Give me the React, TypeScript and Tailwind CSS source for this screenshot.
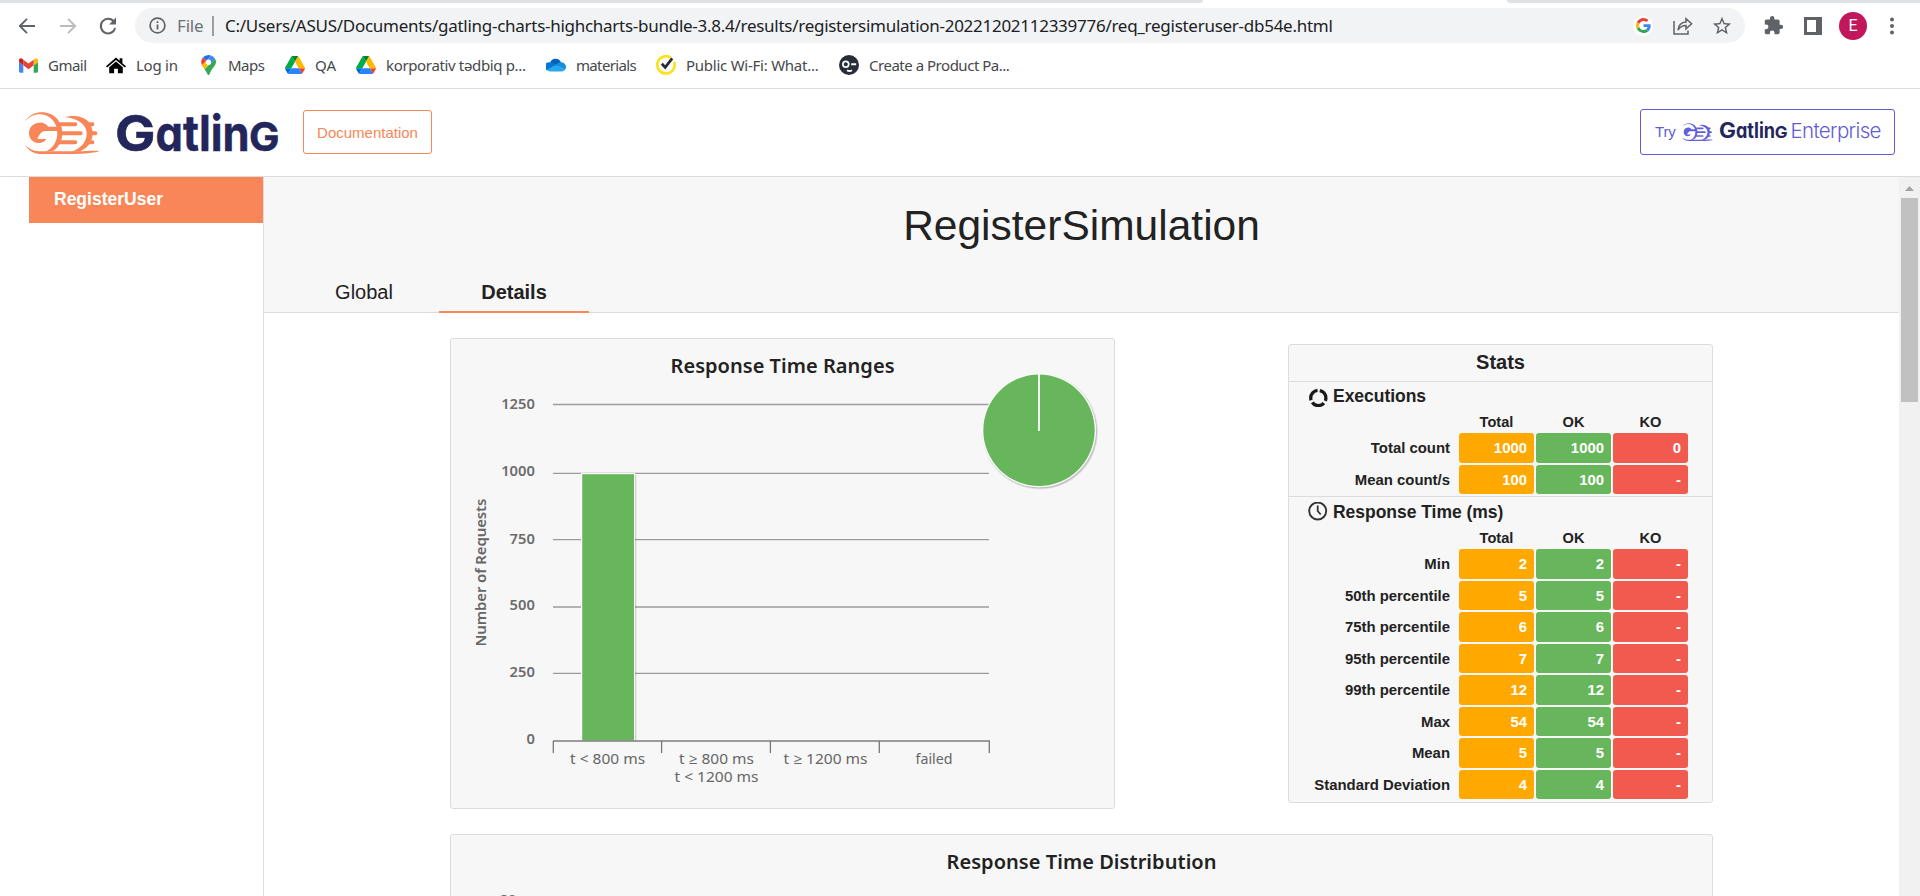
import type { ReactNode } from "react";

const ui = "font-['Noto_Sans','Open_Sans',sans-serif]";

function BackIcon({ flip, color }: { flip?: boolean; color: string }) {
  return (
    <svg width="20" height="20" viewBox="0 0 20 20" className={flip ? "-scale-x-100" : ""}>
      <path d="M18 10H3.500M10 2.800 2.800 10l7.200 7.200" fill="none" stroke={color} strokeWidth="1.900" />
    </svg>
  );
}

function ReloadIcon() {
  return (
    <svg width="20" height="20" viewBox="0 0 20 20">
      <path d="M15.900 5.600A7.300 7.300 0 1 0 17.200 12" fill="none" stroke="#5f6368" strokeWidth="2" />
      <path d="M18 1.600v6.900h-6.900z" fill="#5f6368" />
    </svg>
  );
}

function DriveIcon() {
  return (
    <svg width="20" height="18" viewBox="0 0 87.3 78">
      <path d="M6.6 66.85l3.85 6.65c.8 1.4 1.95 2.5 3.3 3.3L27.5 53H0c0 1.55.4 3.1 1.2 4.5z" fill="#0066da" />
      <path d="M43.65 25L29.9 1.2c-1.35.8-2.5 1.9-3.3 3.3L1.2 48.5A9 9 0 0 0 0 53h27.5z" fill="#00ac47" />
      <path d="M73.55 76.8c1.35-.8 2.5-1.9 3.3-3.3l1.6-2.75L86.1 57.5c.8-1.4 1.2-2.95 1.2-4.5H59.8l5.85 11.5z" fill="#ea4335" />
      <path d="M43.65 25L57.4 1.2C56.05.4 54.5 0 52.9 0H34.4c-1.6 0-3.15.45-4.5 1.2z" fill="#00832d" />
      <path d="M59.8 53H27.5L13.75 76.8c1.35.8 2.9 1.2 4.5 1.2h50.8c1.6 0 3.15-.45 4.5-1.2z" fill="#2684fc" />
      <path d="M73.4 26.5L60.7 4.5c-.8-1.4-1.95-2.5-3.3-3.3L43.65 25 59.8 53h27.45c0-1.55-.4-3.1-1.2-4.5z" fill="#ffba00" />
    </svg>
  );
}

function GatlingMark({ color, width, height }: { color: string; width: number; height: number }) {
  return (
    <svg width={width} height={height} viewBox="0 0 225 126" preserveAspectRatio="none" fill={color}>
      <path d="M0 28C14 8 32 1 51 1c36 0 61 28 61 62 0 24-10 42-27 53l-24 3c22-9 36-30 36-56C97 33 76 8 48 7 29 6 14 13 0 28z" />
      <path d="M0 98c12 13 28 20 48 20h112c20 0 42-3 64-1-20 8-60 9-110 9H50C28 126 10 116 0 98z" />
      <path d="M120 16c10-4 20-5 30-4 34 2 53 24 53 51 0 26-14 44-38 55l-26 1c26-9 46-28 46-54 0-27-26-46-65-49z" />
      <path d="M70 44C62 35 52 31 43 32 24 33 12 46 12 63c0 17 12 30 29 30 10 0 18-4 23-12H41c-4 0-4-2-2-5 5-10 11-18 20-19h45V44z" />
      <path d="M104 31h46q7 0 7 6t-7 6h-46zM108 58h58q7 0 7 6t-7 6h-58zM104 85h46q7 0 7 6t-7 6H98z" />
      <path d="M186 31h17q5 0 5 6t-5 6h-9zM198 58h14q5 0 5 6t-5 6h-14zM194 85h9q5 0 5 6t-5 6h-17z" />
    </svg>
  );
}

function Bookmark({ icon, label, w, track }: { icon: ReactNode; label: string; w: string; track: string }) {
  return (
    <div className={`flex shrink-0 items-center gap-[10px] ${w}`}>
      <span className="flex h-5 w-5 items-center justify-center">{icon}</span>
      <span className={`text-[15px] leading-5 whitespace-nowrap text-[#45484c] ${track}`}>{label}</span>
    </div>
  );
}

function BrowserChrome() {
  return (
    <div className={`flex h-[89px] flex-col border-b border-[#dadce0] bg-white ${ui}`}>
      <div className="flex h-[3px] justify-between overflow-hidden">
        <div className="h-[3px] w-[1203px] rounded-br-[6px] bg-[#dee1e6]" />
        <div className="h-[3px] w-[413px] rounded-bl-[6px] bg-[#dee1e6]" />
      </div>
      <div className="mt-[5px] flex h-[35px] items-center">
        <div className="flex w-[135px] items-center pl-[17px]">
          <BackIcon color="#5f6368" />
          <span className="ml-[21px] flex"><BackIcon flip color="#babcbe" /></span>
          <span className="ml-[20px] flex"><ReloadIcon /></span>
        </div>
        <div className="flex h-[35px] w-[1610px] items-center rounded-full bg-[#f1f3f4]">
          <svg className="ml-[14px]" width="17" height="17" viewBox="0 0 17 17">
            <circle cx="8.500" cy="8.500" r="7.400" fill="none" stroke="#5f6368" strokeWidth="1.700" />
            <path d="M8.500 7.400v5M8.500 4.200v1.800" stroke="#5f6368" strokeWidth="1.800" />
          </svg>
          <span className="ml-[11px] w-[28px] text-[17px] tracking-[-0.17px] whitespace-nowrap text-[#6d7175]">File</span>
          <span className="ml-[7px] h-5 w-[2px] bg-[#9a9da1]" />
          <span className="ml-[11px] w-[1110px] text-[17px] tracking-[-0.272px] whitespace-nowrap text-[#202124]">
            C:/Users/ASUS/Documents/gatling-charts-highcharts-bundle-3.8.4/results/registersimulation-20221202112339776/req_registeruser-db54e.html
          </span>
          <span className="ml-auto flex h-5 w-5 items-center justify-center rounded-full bg-white">
            <svg width="15" height="15" viewBox="0 0 48 48">
              <path fill="#EA4335" d="M24 9.5c3.54 0 6.71 1.22 9.21 3.6l6.85-6.85C35.9 2.38 30.47 0 24 0 14.62 0 6.51 5.38 2.56 13.22l7.98 6.19C12.43 13.72 17.74 9.5 24 9.5z" />
              <path fill="#4285F4" d="M46.98 24.55c0-1.57-.15-3.09-.38-4.55H24v9.02h12.94c-.58 2.96-2.26 5.48-4.78 7.18l7.73 6c4.51-4.18 7.09-10.36 7.09-17.65z" />
              <path fill="#FBBC05" d="M10.53 28.59c-.48-1.45-.76-2.99-.76-4.59s.27-3.14.76-4.59l-7.98-6.19C.92 16.46 0 20.12 0 24c0 3.88.92 7.54 2.56 10.78l7.97-6.19z" />
              <path fill="#34A853" d="M24 48c6.48 0 11.93-2.13 15.89-5.81l-7.73-6c-2.15 1.45-4.92 2.3-8.16 2.3-6.26 0-11.57-4.22-13.47-9.91l-7.98 6.19C6.51 42.62 14.62 48 24 48z" />
            </svg>
          </span>
          <svg className="ml-[19px]" width="22" height="20" viewBox="0 0 22 20" fill="none" stroke="#5f6368" strokeWidth="1.500">
            <path d="M2 5v13h14v-3.500" />
            <path d="M6 14c.6-5 3.600-7.600 8-7.900V2.600l5.600 5.100-5.600 5.100V9.600c-3.600 0-6 1.300-8 4.400z" />
          </svg>
          <svg className="mr-[12px] ml-[17px]" width="22" height="22" viewBox="0 0 24 24" fill="#5f6368">
            <path d="M22 9.240l-7.190-.62L12 2 9.190 8.630 2 9.240l5.460 4.730L5.820 21 12 17.270 18.180 21l-1.630-7.030L22 9.240zM12 15.400l-3.760 2.270 1-4.280-3.320-2.880 4.380-.38L12 6.100l1.710 4.040 4.380.38-3.320 2.880 1 4.280L12 15.400z" />
          </svg>
        </div>
        <svg className="ml-[18px]" width="21" height="21" viewBox="0 0 24 24" fill="#5f6368">
          <path d="M20.500 11H19V7c0-1.100-.9-2-2-2h-4V3.500a2.500 2.500 0 0 0-5 0V5H4c-1.100 0-2 .9-2 2v3.800h1.500a2.700 2.700 0 0 1 0 5.400H2V20c0 1.100.9 2 2 2h3.800v-1.500a2.700 2.700 0 0 1 5.400 0V22H17c1.100 0 2-.9 2-2v-4h1.500a2.500 2.500 0 0 0 0-5z" />
        </svg>
        <span className="ml-[20px] h-[18px] w-[18px] bg-[#5f6368] pt-[3px] pl-[3px]">
          <span className="block h-3 w-[9px] bg-white" />
        </span>
        <span className="ml-[17px] flex h-7 w-7 items-center justify-center rounded-full bg-[#c2185b] font-['Roboto',sans-serif] text-[16px] text-white">E</span>
        <svg className="ml-[22px]" width="6" height="18" viewBox="0 0 6 18" fill="#5f6368">
          <circle cx="3" cy="2.500" r="2" /><circle cx="3" cy="9" r="2" /><circle cx="3" cy="15.500" r="2" />
        </svg>
      </div>
      <div className="mt-[11px] flex h-[22px] items-center pl-[18px]">
        <Bookmark w="w-[88px]" track="tracking-[-0.52px]" label="Gmail" icon={
          <svg width="19" height="15" viewBox="52 42 88 66">
            <path fill="#4285f4" d="M58 108h14V74L52 59v43c0 3.320 2.690 6 6 6" />
            <path fill="#34a853" d="M120 108h14c3.320 0 6-2.690 6-6V59l-20 15" />
            <path fill="#fbbc04" d="M120 48v26l20-15v-8c0-7.420-8.470-11.650-14.400-7.200" />
            <path fill="#ea4335" d="M72 74V48l24 18 24-18v26L96 92" />
            <path fill="#c5221f" d="M52 51v8l20 15V48l-5.600-4.200c-5.940-4.450-14.400-.220-14.400 7.200" />
          </svg>} />
        <Bookmark w="w-[92px]" track="tracking-[-0.25px]" label="Log in" icon={
          <svg width="20" height="17" viewBox="0 0 20 17">
            <path d="M0 9.300L10 .6l3.600 3.100V1.300h2.800v4.900L20 9.300l-1.100 1.300L10 3 1.100 10.600zM3.200 10.300L10 4.500l6.800 5.800V16.300h-4.900v-4.600H8.100v4.600H3.200z" />
          </svg>} />
        <Bookmark w="w-[87px]" track="tracking-[-0.5px]" label="Maps" icon={
          <svg width="15" height="20" viewBox="0 0 15 20">
            <path d="M7.500 0A7.300 7.300 0 0 0 1.900 2.600L5.600 5.800 10 .5A7 7 0 0 0 7.500 0z" fill="#1a73e8" />
            <path d="M1.900 2.600A7.400 7.400 0 0 0 .9 10.200L5.600 5.800z" fill="#ea4335" />
            <path d="M10 .5L5.600 5.800l3.900 3.300 4.500-5.400A7.400 7.400 0 0 0 10 .5z" fill="#4285f4" />
            <path d="M5.600 5.800L.9 10.200c.6 1.300 1.700 2.600 2.700 4l6-7z" fill="#fbbc04" />
            <path d="M14 3.700L3.600 14.200C5.300 16.500 6.500 20 7.500 20c1.200 0 1.500-3 3.300-5.600 2-2.700 4.200-4.500 4.200-7.400 0-1.300-.4-2.300-1-3.300z" fill="#34a853" />
            <circle cx="7.500" cy="7.200" r="2.700" fill="#fff" />
          </svg>} />
        <Bookmark w="w-[71px]" track="tracking-normal" label="QA" icon={<DriveIcon />} />
        <Bookmark w="w-[190px]" track="tracking-[-0.35px]" label="korporativ tədbiq p..." icon={<DriveIcon />} />
        <Bookmark w="w-[110px]" track="tracking-[-0.66px]" label="materials" icon={
          <svg width="20" height="14" viewBox="0 0 20 14">
            <path d="M4 4.500A6 6 0 0 1 15 4.200L12 9z" fill="#0364b8" />
            <path d="M4 4.300c2 0 3 .5 4.500 1.500L12 8 2 12.500A4.200 4.200 0 0 1 4 4.300z" fill="#0078d4" />
            <path d="M15 4.200c3 0 5 2.200 5 4.800 0 1-.3 2-1 2.700L9.500 7C11.500 5.500 12.500 4.200 15 4.200z" fill="#1490df" />
            <path d="M9.500 7l9.700 4.600c-.8 1.100-2 1.900-3.500 1.900H4.300A4 4 0 0 1 1 11.700z" fill="#28a8ea" />
          </svg>} />
        <Bookmark w="w-[183px]" track="tracking-[-0.25px]" label="Public Wi-Fi: What..." icon={
          <svg width="20" height="20" viewBox="0 0 20 20" fill="none">
            <path d="M14.800 2.600A8.700 8.700 0 1 0 18.200 7" stroke="#fde11a" strokeWidth="2.600" />
            <path d="M5.800 8.800l3.400 3.600 7-9" stroke="#2b2d33" strokeWidth="2.800" />
          </svg>} />
        <Bookmark w="w-[170px]" track="tracking-[-0.48px]" label="Create a Product Pa..." icon={
          <svg width="20" height="20" viewBox="0 0 20 20" fill="none">
            <circle cx="10" cy="10" r="10" fill="#282d37" />
            <circle cx="6.800" cy="9.200" r="2.900" stroke="#fff" strokeWidth="1.700" />
            <path d="M12.200 9.200h5M8 15.200q2.500 1.600 5 0" stroke="#fff" strokeWidth="1.900" />
          </svg>} />
      </div>
    </div>
  );
}

function SiteHeader() {
  return (
    <header className="flex h-[88px] items-start border-b border-[#dcdcdc] bg-white pt-[20px]">
      <div className="flex w-[303px] items-start pl-[25px]">
        <span className="mt-[3px] flex"><GatlingMark color="#f98658" width={75} height={42} /></span>
        <svg className="-mt-[4px] ml-[15px] overflow-visible font-['Inter',sans-serif] font-bold [font-feature-settings:'cv11']" width="168" height="56" viewBox="0 0 168 56" fill="#23265b" stroke="#23265b" strokeWidth=".5">
          <text y="46" fontSize="50">
            <tspan x="0" textLength="40.500" lengthAdjust="spacingAndGlyphs">G</tspan>
            <tspan x="40.500" textLength="94" lengthAdjust="spacingAndGlyphs">atlin</tspan>
            <tspan x="134" fontSize="39" textLength="30.500" lengthAdjust="spacingAndGlyphs" className="uppercase">g</tspan>
          </text>
        </svg>
      </div>
      <a className="mt-px flex h-[44px] w-[129px] items-center justify-center rounded-[3px] border border-[#f98658] pt-[2px] text-[15px] text-[#f98658]">
        Documentation
      </a>
      <a className="mr-[25px] ml-auto flex h-[46px] w-[255px] items-center rounded-[3px] border border-[#5f5cd6] pl-[14px] text-[15px] text-[#5f5cd6]">
        <span className="mt-px w-[27px] tracking-[-0.2px]">Try</span>
        <GatlingMark color="#6361da" width={31} height={18} />
        <svg className="ml-[6px] overflow-visible font-['Inter',sans-serif] [font-feature-settings:'cv11']" width="166" height="30" viewBox="0 0 166 30">
          <text y="21" fontSize="21" fill="#23265b" className="font-bold">
            <tspan x="0" textLength="17" lengthAdjust="spacingAndGlyphs">G</tspan>
            <tspan x="17" textLength="39" lengthAdjust="spacingAndGlyphs">atlin</tspan>
            <tspan x="55.800" fontSize="16.500" textLength="12.800" lengthAdjust="spacingAndGlyphs" className="uppercase">g</tspan>
          </text>
          <text x="71.500" y="21" fontSize="20.500" textLength="91" fill="#5f5cd6" className="font-light">Enterprise</text>
        </svg>
      </a>
    </header>
  );
}

const yTicks = [
  { v: "1250", y: 404.5, b: 409.3 },
  { v: "1000", y: 473.3, b: 475.6 },
  { v: "750", y: 539.7, b: 543.5 },
  { v: "500", y: 607, b: 609.7 },
  { v: "250", y: 673.4, b: 677.3 },
];

const xLabels = [
  { t: "t < 800 ms", x: 607.6, y: 764.3, w: 75 },
  { t: "t ≥ 800 ms", x: 716.5, y: 764.3, w: 75 },
  { t: "t < 1200 ms", x: 716.5, y: 782.3, w: 84 },
  { t: "t ≥ 1200 ms", x: 825.5, y: 764.3, w: 84 },
  { t: "failed", x: 934, y: 764.3, w: 37 },
];

function RangesChart() {
  return (
    <svg width="663" height="469" viewBox="451 339 663 469" className={ui}>
      <text x="782.5" y="373.300" textAnchor="middle" fontSize="20" fontWeight="600" fill="#222" textLength="224">Response Time Ranges</text>
      <text transform="translate(485.700 572.500) rotate(-90)" textAnchor="middle" fontSize="15" fontWeight="600" fill="#666" textLength="148">Number of Requests</text>
      {yTicks.map((t) => (
        <g key={t.v}>
          <path d={`M553 ${t.y}H989`} stroke="#9b9b9b" strokeWidth="1.300" />
          <text x="534.800" y={t.b} textAnchor="end" fontSize="14.700" fontWeight="600" fill="#6b6b6b">{t.v}</text>
        </g>
      ))}
      <text x="534.800" y="744.300" textAnchor="end" fontSize="14.700" fontWeight="600" fill="#6b6b6b">0</text>
      <rect x="582" y="475" width="54.500" height="266" fill="#000" opacity="0.100" />
      <rect x="582" y="475" width="53.500" height="266" fill="#000" opacity="0.100" />
      <rect x="581" y="473" width="54" height="268" fill="#fff" />
      <rect x="582.200" y="474.200" width="51.800" height="266.300" fill="#68b65c" />
      <path d="M553 741H990" stroke="#7d7d7d" strokeWidth="1.600" />
      <path d="M553.3 741v12M661.6 741v12M770.4 741v12M879.300 741v12M989.300 741v12" stroke="#777" strokeWidth="1.300" />
      {xLabels.map((l) => (
        <text key={l.t + l.x} x={l.x} y={l.y} textAnchor="middle" fontSize="14.500" fill="#666" textLength={l.w} lengthAdjust="spacingAndGlyphs">{l.t}</text>
      ))}
      <circle cx="1040" cy="431.500" r="58" fill="#000" opacity="0.080" />
      <circle cx="1040" cy="431.500" r="57" fill="#000" opacity="0.150" />
      <circle cx="1039" cy="430.300" r="57" fill="#fff" />
      <circle cx="1039" cy="430.300" r="55.700" fill="#68b65c" />
      <path d="M1039 372.500V431" stroke="#fff" strokeWidth="1.800" />
    </svg>
  );
}

function DistributionChart() {
  return (
    <svg width="1261" height="61" viewBox="451 835 1261 61" className={ui}>
      <text x="1081.500" y="869.300" textAnchor="middle" fontSize="20" fontWeight="600" fill="#222" textLength="270">Response Time Distribution</text>
      <text x="516.500" y="904.800" textAnchor="end" fontSize="14.700" fontWeight="600" fill="#6b6b6b">80</text>
    </svg>
  );
}

type Row = [string, string, string, string];

const execRows: Row[] = [
  ["Total count", "1000", "1000", "0"],
  ["Mean count/s", "100", "100", "-"],
];
const timeRows: Row[] = [
  ["Min", "2", "2", "-"],
  ["50th percentile", "5", "5", "-"],
  ["75th percentile", "6", "6", "-"],
  ["95th percentile", "7", "7", "-"],
  ["99th percentile", "12", "12", "-"],
  ["Max", "54", "54", "-"],
  ["Mean", "5", "5", "-"],
  ["Standard Deviation", "4", "4", "-"],
];

function StatsSection({ icon, title, rows, headH }: { icon: ReactNode; title: string; rows: Row[]; headH: string }) {
  return (
    <div>
      <div className={`flex items-center gap-[5px] pl-[19px] ${headH}`}>
        {icon}
        <h3 className="text-[17.500px] tracking-[-0.03px] font-bold">{title}</h3>
      </div>
      <div className="grid h-[22px] grid-cols-[168px_75px_75px_75px] gap-x-[2px] text-center text-[14.600px] leading-[23px] font-bold">
        <span />
        <span>Total</span>
        <span>OK</span>
        <span>KO</span>
      </div>
      <div className="flex flex-col gap-[2px]">
        {rows.map((r) => (
          <div key={r[0]} className="grid h-[29.500px] grid-cols-[168px_75px_75px_75px] gap-x-[2px] text-[14.900px] leading-[31px] font-bold">
            <span className="h-[29.500px] pr-[7px] text-right">{r[0]}</span>
            <span className="h-[29.500px] rounded-[3px] bg-[#ffa900] pr-[7px] text-right text-white">{r[1]}</span>
            <span className="h-[29.500px] rounded-[3px] bg-[#68b65c] pr-[7px] text-right text-white">{r[2]}</span>
            <span className="h-[29.500px] rounded-[3px] bg-[#f15b4f] pr-[7px] text-right text-white">{r[3]}</span>
          </div>
        ))}
      </div>
    </div>
  );
}

function Stats() {
  return (
    <section className="mt-[6px] h-[459px] w-[425px] rounded-[3px] border border-[#dcdcdc] bg-[#f7f7f7] text-[#222]">
      <h2 className="h-[37px] border-b border-[#dcdcdc] text-center text-[20px] leading-[34px] font-bold">Stats</h2>
      <StatsSection title="Executions" headH="h-[29px]" rows={execRows} icon={
        <svg width="20" height="20" viewBox="0 0 20 20">
          <circle cx="10.300" cy="11" r="7.600" fill="none" stroke="#1a1a1a" strokeWidth="3.300" strokeDasharray="13.300 2.620" strokeDashoffset="-1.500" transform="rotate(-90 10.300 11)" />
        </svg>} />
      <div className="mt-[2px] border-t border-[#dcdcdc]" />
      <StatsSection title="Response Time (ms)" headH="h-[30px]" rows={timeRows} icon={
        <svg width="20" height="20" viewBox="0 0 20 20" fill="none" stroke="#333">
          <circle cx="9.700" cy="9" r="8.500" strokeWidth="1.900" />
          <path d="M9.700 3.500v5.500l3 3.500" strokeWidth="1.800" />
        </svg>} />
    </section>
  );
}

export default function App() {
  return (
    <div className="flex h-[896px] w-[1920px] flex-col overflow-hidden bg-white font-['Liberation_Sans',Arial,sans-serif] text-[#222]">
      <BrowserChrome />
      <SiteHeader />
      <div className="flex min-h-0 flex-1">
        <aside className="w-[264px] border-r border-[#dcdcdc] pl-[29px]">
          <div className="flex h-[46px] items-center bg-[#f98658] pb-px pl-[25px] text-[17.500px] font-bold text-white">RegisterUser</div>
        </aside>
        <main className="flex w-[1635px] flex-col">
          <div className="flex h-[136px] flex-col border-b border-[#dcdcdc] bg-[#f7f7f7]">
            <h1 className="mt-[24px] h-[50px] text-center text-[42.500px] leading-[50px]">RegisterSimulation</h1>
            <nav className="mt-[19px] flex h-[43px] pl-[25px] text-[20px] leading-[45px]">
              <span className="w-[150px] text-center">Global</span>
              <span className="w-[150px] border-b-2 border-[#f98658] text-center font-bold">Details</span>
            </nav>
          </div>
          <div className="flex flex-col pt-[25px] pl-[186px]">
            <div className="flex w-[1263px] items-start justify-between">
              <section className="h-[471px] w-[665px] rounded-[3px] border border-[#dcdcdc] bg-[#f7f7f7]"><RangesChart /></section>
              <Stats />
            </div>
            <section className="mt-[25px] h-[90px] w-[1263px] shrink-0 rounded-[3px] border border-[#dcdcdc] bg-[#f7f7f7]"><DistributionChart /></section>
          </div>
        </main>
        <div className="flex w-[21px] flex-col items-center bg-[#f1f1f1] pt-[9px]">
          <svg width="9" height="5" viewBox="0 0 9 5"><path d="M0 5L4.500 0 9 5z" fill="#a3a3a3" /></svg>
          <div className="mt-[7px] h-[204px] w-[17px] bg-[#c1c1c1]" />
        </div>
      </div>
    </div>
  );
}
